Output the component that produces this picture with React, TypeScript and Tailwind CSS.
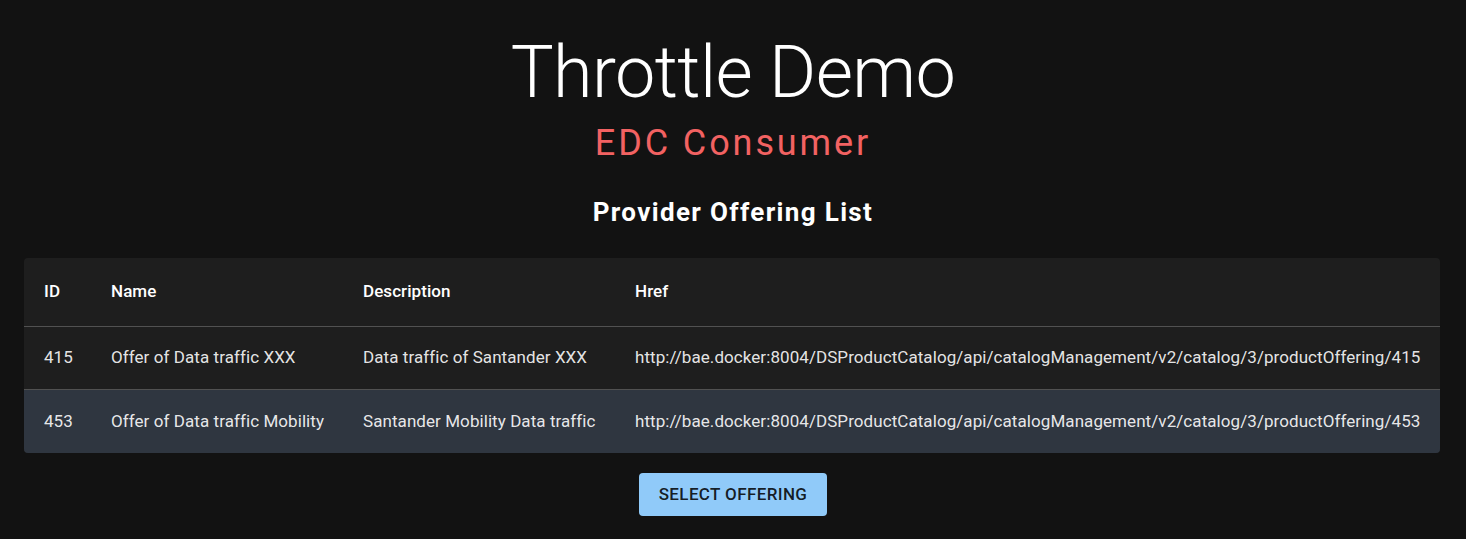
import React from "react";

const rows = [
  {
    id: "415",
    name: "Offer of Data traffic XXX",
    desc: "Data traffic of Santander XXX",
    href: "http://bae.docker:8004/DSProductCatalog/api/catalogManagement/v2/catalog/3/productOffering/415",
    selected: false,
  },
  {
    id: "453",
    name: "Offer of Data traffic Mobility",
    desc: "Santander Mobility Data traffic",
    href: "http://bae.docker:8004/DSProductCatalog/api/catalogManagement/v2/catalog/3/productOffering/453",
    selected: true,
  },
];

const cols = "grid grid-cols-[67px_252px_272px_1fr]";

export default function App() {
  return (
    <div
      className="min-h-[539px] w-full bg-[#121212] text-white flex flex-col items-center pt-[37px]"
      style={{ fontFamily: "Roboto, 'Liberation Sans', sans-serif" }}
    >
      <h1 className="text-[72px] leading-[72px] font-light tracking-[-0.6px] text-white">Throttle Demo</h1>
      <h2 className="mt-[16px] text-[36px] leading-[36px] font-normal tracking-[2.9px] text-[#f26262]">EDC Consumer</h2>
      <h3 className="mt-[38px] text-[26px] leading-[26px] font-bold tracking-[1.35px] text-white">Provider Offering List</h3>

      <div className="mt-[33px] self-start ml-[24px] w-[1416px] rounded-[4px] bg-[#1e1e1e] overflow-hidden text-[17px] tracking-[0.07px]">
        <div className={`${cols} h-[69px] items-center border-b border-[#515151] font-medium`}>
          <div className="pl-5">ID</div>
          <div className="pl-5">Name</div>
          <div className="pl-5">Description</div>
          <div className="pl-5">Href</div>
        </div>
        {rows.map((r, i) => (
          <div
            key={r.id}
            className={`${cols} h-[63px] items-center ${i === 0 ? "border-b border-[#515151]" : ""} ${
              r.selected ? "bg-[#2f3640]" : ""
            } text-[rgba(255,255,255,0.9)]`}
          >
            <div className="pl-5">{r.id}</div>
            <div className="pl-5">{r.name}</div>
            <div className="pl-5">{r.desc}</div>
            <div className="pl-5 whitespace-nowrap">{r.href}</div>
          </div>
        ))}
      </div>

      <button className="mt-[20px] h-[43px] w-[188px] rounded-[4px] bg-[#90caf9] text-[rgba(0,0,0,0.87)] text-[17px] font-medium uppercase tracking-[0.38px]">
        Select Offering
      </button>
    </div>
  );
}
